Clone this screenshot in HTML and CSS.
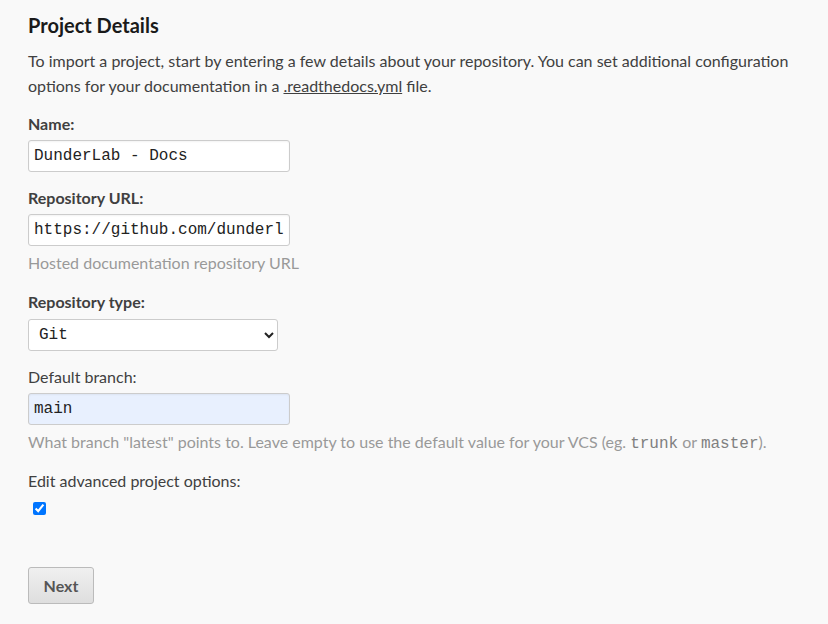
FILE: index.html
```html
<!DOCTYPE html>
<html>
<head>
<meta charset="utf-8">
<link rel="stylesheet" href="styles.css">
</head>
<body>
<main class="page">
  <h2 class="title">Project Details</h2>
  <p class="intro">To import a project, start by entering a few details about your repository. You can set additional configuration options for your documentation in a <a href="#">.readthedocs.yml</a> file.</p>

  <div class="field">
    <label class="label bold">Name:</label>
    <input class="input" type="text" value="DunderLab - Docs">
  </div>

  <div class="field">
    <label class="label bold">Repository URL:</label>
    <input class="input" type="text" value="https://github.com/dunderlab/docs">
    <span class="help">Hosted documentation repository URL</span>
  </div>

  <div class="field">
    <label class="label bold">Repository type:</label>
    <select class="select"><option>Git</option></select>
  </div>

  <div class="field">
    <label class="label">Default branch:</label>
    <input class="input autofill" type="text" value="main">
    <span class="help">What branch "latest" points to. Leave empty to use the default value for your VCS (eg. <code>trunk</code> or <code>master</code>).</span>
  </div>

  <div class="field field-check">
    <label class="label">Edit advanced project options:</label>
    <input class="check" type="checkbox" checked>
  </div>

  <button class="btn">Next</button>
</main>
</body>
</html>
```
FILE: styles.css
```css
html, body {
  margin: 0;
  padding: 0;
  background: #f9f9f9;
}
body {
  font-family: Lato, "Liberation Sans", sans-serif;
  color: #404040;
}
.page {
  padding: 10px 28px 0 28px;
}
.title {
  margin: 0;
  font-size: 20px;
  font-weight: 700;
  color: #1a1a1a;
  line-height: 30px;
}
.intro {
  margin: 8px 0 0;
  font-size: 16px;
  line-height: 25px;
}
.intro a {
  color: #404040;
  text-decoration: underline;
}
.field {
  display: flex;
  flex-direction: column;
  align-items: flex-start;
  margin-top: 14px;
}
.field-check {
  margin-top: 12px;
}
.label {
  font-size: 16px;
  line-height: 24px;
  margin-bottom: 4px;
}
.bold { font-weight: 700; }
.input {
  box-sizing: border-box;
  width: 262px;
  height: 32px;
  padding: 0 5px;
  border: 1px solid #ccc;
  border-radius: 3px;
  background: #fff;
  font-family: "Liberation Mono", monospace;
  font-size: 16px;
  color: #222;
  box-shadow: inset 0 1px 2px rgba(0,0,0,0.05);
}
.autofill {
  background: #e8f0fe;
}
.select {
  box-sizing: border-box;
  width: 250px;
  height: 32px;
  margin-top: 1px;
  padding: 0 6px;
  border: 1px solid #ccc;
  border-radius: 3px;
  background: #fff;
  font-family: "Liberation Mono", monospace;
  font-size: 16px;
  color: #222;
}
.help {
  font-size: 16px;
  line-height: 24px;
  color: #999;
  margin: 5px 0 1px;
}
.help code {
  font-family: "Liberation Mono", monospace;
  font-size: 16px;
  color: #808080;
}
.check {
  margin: 5px 0 0 5px;
  width: 13px;
  height: 13px;
}
.btn {
  margin-top: 52px;
  box-sizing: border-box;
  width: 66px;
  height: 37px;
  border: 1px solid #bbb;
  border-radius: 3px;
  background: linear-gradient(#f0f0f0, #dedede);
  font-family: Lato, sans-serif;
  font-weight: 700;
  font-size: 16px;
  color: #555;
}
```
